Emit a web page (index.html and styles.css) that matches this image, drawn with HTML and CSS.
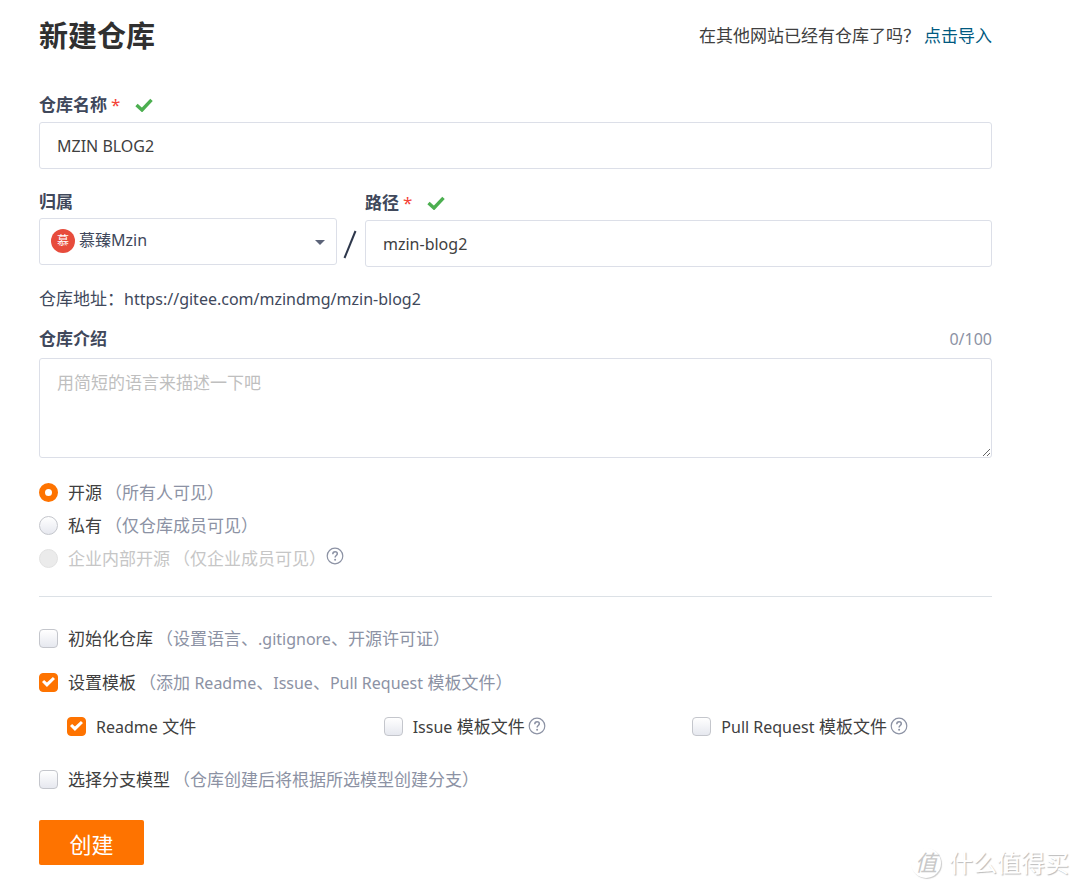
FILE: index.html
```
<!DOCTYPE html>
<html lang="zh-CN">
<head>
<meta charset="utf-8">
<meta name="viewport" content="width=device-width, initial-scale=1">
<title>新建仓库</title>
<link rel="stylesheet" href="styles.css">
</head>
<body>
<svg class="symbols" aria-hidden="true">
  <symbol id="check" viewBox="0 0 18 14"><path d="M1.500 7l5.500 5L16.500 1.800" fill="none" stroke="currentColor" stroke-width="3.4"/></symbol>
  <symbol id="help" viewBox="0 0 18 18"><circle cx="9" cy="9" r="7.8" fill="none" stroke="currentColor" stroke-width="1.2"/><path d="M6.8 7.2c0-1.5 1-2.4 2.3-2.4s2.2.8 2.2 2c0 1.700-2.200 1.800-2.200 3.700" fill="none" stroke="currentColor" stroke-width="1.500"/><circle cx="9.100" cy="12.800" r="1" fill="currentColor"/></symbol>
</svg>
<main class="page">
  <header class="head">
    <h1 class="title">新建仓库</h1>
    <p class="import">在其他网站已经有仓库了吗？<a class="import-link" href="#">点击导入</a></p>
  </header>
  <form class="form">
    <div class="field">
      <div class="label-row">
        <label class="label" for="name">仓库名称</label><span class="required">*</span>
        <svg class="valid"><use href="#check"/></svg>
      </div>
      <input class="input" id="name" type="text" value="MZIN BLOG2">
    </div>
    <div class="location">
      <div class="field owner">
        <div class="label-row"><label class="label" for="owner">归属</label></div>
        <div class="select-box">
          <select class="input select" id="owner"><option>慕臻Mzin</option></select>
          <span class="avatar">慕</span>
          <svg class="caret" viewBox="0 0 10 5"><path d="M0 0h10L5 5z" fill="currentColor"/></svg>
        </div>
      </div>
      <svg class="slash" viewBox="0 0 14 30"><path d="M1.500 28L12.500 1" stroke="currentColor" stroke-width="2"/></svg>
      <div class="field path">
        <div class="label-row">
          <label class="label" for="path">路径</label><span class="required">*</span>
          <svg class="valid"><use href="#check"/></svg>
        </div>
        <input class="input" id="path" type="text" value="mzin-blog2">
      </div>
    </div>
    <p class="address">仓库地址：<span class="latin">https://gitee.com/mzindmg/mzin-blog2</span></p>
    <div class="field intro">
      <div class="label-row">
        <label class="label" for="intro">仓库介绍</label>
        <span class="count">0/100</span>
      </div>
      <textarea class="input area" id="intro" placeholder="用简短的语言来描述一下吧"></textarea>
    </div>
    <div class="visibility">
      <label class="choice"><input class="radio" type="radio" name="v" checked>开源 <span class="note">（所有人可见）</span></label>
      <label class="choice"><input class="radio" type="radio" name="v">私有 <span class="note">（仅仓库成员可见）</span></label>
      <div class="choice-row">
        <label class="choice disabled"><input class="radio" type="radio" name="v" disabled>企业内部开源 <span>（仅企业成员可见）</span></label>
        <svg class="help raised"><use href="#help"/></svg>
      </div>
    </div>
    <hr class="rule">
    <div class="options">
      <label class="choice"><input class="check" type="checkbox">初始化仓库 <span class="note">（设置语言、<span class="latin">.gitignore</span>、开源许可证）</span></label>
      <label class="choice"><input class="check" type="checkbox" checked>设置模板 <span class="note">（添加 <span class="latin">Readme</span>、<span class="latin">Issue</span>、<span class="latin">Pull Request</span> 模板文件）</span></label>
      <div class="templates">
        <label class="choice"><input class="check" type="checkbox" checked><span><span class="latin">Readme</span> 文件</span></label>
        <div class="choice-row">
          <label class="choice"><input class="check" type="checkbox"><span><span class="latin">Issue</span> 模板文件</span></label>
          <svg class="help"><use href="#help"/></svg>
        </div>
        <div class="choice-row">
          <label class="choice"><input class="check" type="checkbox"><span><span class="latin">Pull Request</span> 模板文件</span></label>
          <svg class="help"><use href="#help"/></svg>
        </div>
      </div>
      <label class="choice"><input class="check" type="checkbox">选择分支模型 <span class="note">（仓库创建后将根据所选模型创建分支）</span></label>
    </div>
    <button class="submit" type="button">创建</button>
  </form>
</main>
<div class="watermark"><span class="seal">值</span>什么值得买</div>
</body>
</html>
```
FILE: styles.css
```
* { box-sizing: border-box; }
body {
  margin: 0;
  background: #fff;
  color: #40485b;
  font: 17px/24px "Noto Sans", "Noto Sans CJK SC", sans-serif;
}
.symbols { display: none; }
.page { padding: 16px 88px 24px 39px; }
.head { display: flex; justify-content: space-between; align-items: center; }
.title { margin: 0; color: #303030; font-size: 29px; line-height: 40px; }
.import { margin: 0; color: #404040; }
.import-link { margin-left: 4px; color: #005980; text-decoration: none; }
.form { padding-top: 37px; }
.field { display: flex; flex-direction: column; gap: 5px; }
.label-row { display: flex; align-items: center; }
.label { font-weight: 700; }
.required { margin-left: 4px; color: #f44336; }
.valid { width: 18px; height: 14px; margin-left: 15px; color: #4caf50; }
.input {
  width: 100%;
  height: 47px;
  padding: 0 17px;
  border: 1px solid #dcdfe8;
  border-radius: 3px;
  outline: 0;
  background: #fff;
  color: #404040;
  font: 16px/24px "Noto Sans", "Noto Sans CJK SC", sans-serif;
}
.location { display: flex; margin-top: 20px; }
.owner { width: 298px; gap: 4px; padding-top: 1px; }
.path { flex: 1; padding-top: 2px; }
.select-box { position: relative; }
.select { appearance: none; padding: 0 40px 3px 39px; color: #40485b; }
.avatar {
  position: absolute;
  left: 12px;
  top: 11px;
  width: 24px;
  border-radius: 50%;
  background: #e74c3c;
  color: #fff;
  font-size: 12px;
  text-align: center;
  pointer-events: none;
}
.caret { position: absolute; right: 12px; top: 22px; width: 10px; height: 5px; color: #5b6378; pointer-events: none; }
.slash { width: 14px; height: 30px; margin: 41px 8px 0 6px; color: #2d374b; }
.address { margin: 20px 0 16px; }
.intro { gap: 7px; }
.latin, .count { font-size: 16px; }
.count { margin-left: auto; color: #8c92a4; }
.area { display: block; height: 100px; padding: 12px 17px; font-size: 17px; }
.area::placeholder { color: #bfbfbf; }
.visibility { display: grid; gap: 9px; margin-top: 23px; }
.choice-row { display: flex; align-items: center; }
.choice { display: flex; align-items: center; color: #404040; }
.choice > span { margin-left: 3px; }
.templates .choice > span { margin-left: 0; }
.choice .note { color: #8c92a4; }
.choice.disabled { color: #c6c6c6; }
.radio, .check {
  flex: none;
  appearance: none;
  width: 19px;
  height: 19px;
  margin: 0 10px 1px 0;
  border: 1px solid #c4c6cc;
  background: linear-gradient(#fff, #e6e8ef);
}
.radio { border-radius: 50%; }
.radio:checked { border: 6px solid #fe7300; background: #fff; }
.radio:disabled { border-color: #e2e2e2; background: #ebebeb; }
.check { display: grid; place-items: center; margin-bottom: 2px; border-radius: 4px; }
.check:checked { border-color: #fe7300; background: #fe7300; }
.check:checked::before {
  content: "";
  width: 13px;
  height: 10px;
  background: #fff;
  clip-path: polygon(0 50%, 16% 30%, 38% 56%, 84% 0, 100% 20%, 38% 100%);
}
.help { width: 18px; height: 18px; margin: 0 0 2px 3px; color: #8c92a4; }
.raised { margin: 0 0 6px 0; }
.rule { height: 1px; margin: 25px 0 30px; border: 0; background: #dce1e6; }
.options { display: grid; gap: 20px; }
.templates { display: grid; grid-template-columns: 317fr 309fr 300fr; padding: 0 0 9px 28px; }
.submit {
  width: 105px;
  height: 45px;
  margin-top: 28px;
  border: 0;
  border-radius: 2px;
  background: #fe7300;
  color: #fff;
  font: 22px/32px "Noto Sans CJK SC", sans-serif;
}
.watermark {
  position: absolute;
  right: 11px;
  bottom: 11px;
  display: flex;
  align-items: center;
  gap: 8px;
  color: #fff;
  font-size: 24px;
  line-height: 32px;
  text-shadow: 1px 1px 1px #bbb;
}
.seal {
  width: 30px;
  height: 30px;
  border-radius: 50%;
  box-shadow: 1px 1px 1px #ccc;
  color: #c8c8c8;
  font-size: 22px;
  font-style: italic;
  line-height: 28px;
  text-align: center;
  text-shadow: none;
}
```
